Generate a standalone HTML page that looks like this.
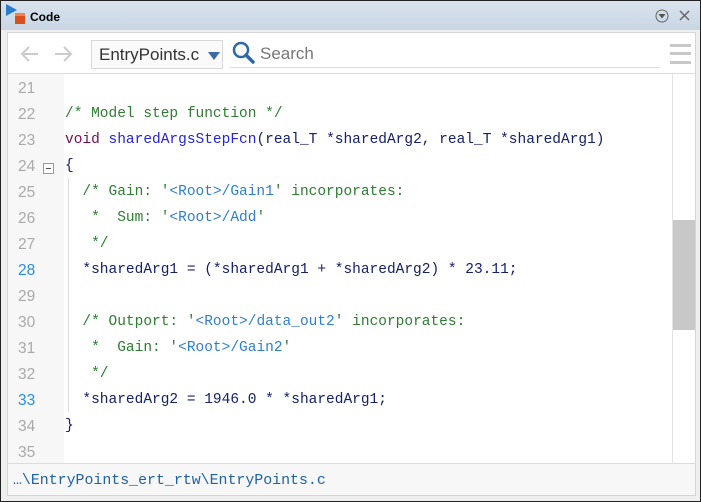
<!DOCTYPE html>
<html><head><style>
*{margin:0;padding:0;box-sizing:border-box}
body{width:701px;height:502px;overflow:hidden;background:#f0f0f0;font-family:"Liberation Sans",sans-serif;position:relative}
.win{position:absolute;left:0;top:0;width:701px;height:502px;border:1px solid #222;background:#efefef}
.title{position:absolute;left:0;top:0;width:699px;height:29px;background:linear-gradient(#d9e3ee,#c9d6e4)}
.title .t{position:absolute;left:29px;top:9px;font-size:12px;font-weight:bold;color:#000}
.panel{position:absolute;left:6px;top:31px;width:689px;height:464px;background:#fff;border:1px solid #d6d6d6}
.tool{position:absolute;left:0;top:0;width:687px;height:41px;border-bottom:1px solid #dcdcdc;background:#fff}
.dd{position:absolute;left:83px;top:7px;width:132px;height:29px;border:1px solid #d8d8d8;background:#fafafa;font-size:17px;color:#333;padding:4px 0 0 7px}
.search{position:absolute;left:252px;top:11px;font-size:17px;color:#777}
.sline{position:absolute;left:222px;top:34px;width:430px;border-top:1px solid #ddd}
.gut{position:absolute;left:0;top:41px;width:56px;height:389px;background:#f7f7f7}
.code{position:absolute;left:0;top:43px;width:664px;height:387px;font-family:"Liberation Mono",monospace;font-size:14.5px;white-space:pre}
.ln{position:absolute;left:10px;font-family:"Liberation Sans",sans-serif;font-size:15.5px;color:#aaa}
.l{position:absolute;left:57px;color:#14206a}
.c{color:#2e7d32}.k{color:#7a0a50}.f{color:#2424d8}.u{color:#2f7fd0}
.sb{position:absolute;left:664px;top:41px;width:23px;height:389px;border-left:1px solid #e4e4e4;background:#fff}
.thumb{position:absolute;left:665px;top:187px;width:22px;height:110px;background:#c8c8c8}
.status{position:absolute;left:0;top:430px;width:687px;height:32px;border-top:1px solid #dcdcdc;background:#f7f7f7;font-family:"Liberation Mono",monospace;font-size:14.9px;color:#2060a8;padding:9px 0 0 5px}
</style></head><body><div class="win">
<div class="title">
<svg style="position:absolute;left:4px;top:2px" width="22" height="22"><polygon points="1,1 12,7 1,13" fill="#2a7bd0"/><rect x="10" y="10" width="10" height="11" fill="#d9501c"/><rect x="10" y="10" width="10" height="3" fill="#f08050"/></svg>
<div class="t">Code</div>
<svg style="position:absolute;left:654px;top:8px" width="14" height="14"><circle cx="7" cy="7" r="6" fill="none" stroke="#666"/><polygon points="3.5,5 10.5,5 7,9.5" fill="#555"/></svg>
<svg style="position:absolute;left:678px;top:9px" width="11" height="11"><path d="M1 1L10 10M10 1L1 10" stroke="#666" stroke-width="1.5"/></svg>
</div>
<div class="panel">
<div class="tool">
<svg style="position:absolute;left:10px;top:10px" width="60" height="22"><path d="M20 11H4M11 4L4 11L11 18" stroke="#ccc" stroke-width="2" fill="none"/><path d="M37 11H53M46 4L53 11L46 18" stroke="#ccc" stroke-width="2" fill="none"/></svg>
<div class="dd">EntryPoints.c <span style="position:absolute;left:116px;top:11px;width:0;height:0;border-left:6px solid transparent;border-right:6px solid transparent;border-top:8px solid #3a6aa8"></span></div>
<svg style="position:absolute;left:224px;top:8px" width="24" height="24"><circle cx="9" cy="9" r="7" fill="none" stroke="#2e68a8" stroke-width="2.5"/><path d="M14 14L21 21" stroke="#2e68a8" stroke-width="3.5" stroke-linecap="round"/></svg>
<div class="search">Search</div>
<div class="sline"></div>
<div style="position:absolute;left:662px;top:11px;width:21px;height:3px;background:#c8c8c8"></div>
<div style="position:absolute;left:662px;top:19px;width:21px;height:3px;background:#c8c8c8"></div>
<div style="position:absolute;left:662px;top:28px;width:21px;height:3px;background:#c8c8c8"></div>
</div>
<div class="gut"></div>
<div class="code">
<div class="ln" style="top:4px">21</div>
<div class="ln" style="top:30px">22</div><div class="l c" style="top:30px">/* Model step function */</div>
<div class="ln" style="top:56px">23</div><div class="l" style="top:56px"><span class="k">void</span> <span class="f">sharedArgsStepFcn</span>(real_T *sharedArg2, real_T *sharedArg1)</div>
<div class="ln" style="top:82px">24</div><div style="position:absolute;left:35px;top:87px;width:11px;height:11px;border:1px solid #999;background:#fff"><div style="position:absolute;left:2px;top:4px;width:5px;height:1px;background:#555"></div></div><div class="l" style="top:82px">{</div>
<div style="position:absolute;left:60px;top:102px;width:1px;height:234px;background:#ddd"></div>
<div class="ln" style="top:108px">25</div><div class="l c" style="top:108px">  /* Gain: '<span class="u">&lt;Root&gt;/Gain1</span>' incorporates:</div>
<div class="ln" style="top:134px">26</div><div class="l c" style="top:134px">   *  Sum: '<span class="u">&lt;Root&gt;/Add</span>'</div>
<div class="ln" style="top:160px">27</div><div class="l c" style="top:160px">   */</div>
<div class="ln" style="top:186px;color:#2a8ee0">28</div><div class="l" style="top:186px">  *sharedArg1 = (*sharedArg1 + *sharedArg2) * 23.11;</div>
<div class="ln" style="top:212px">29</div>
<div class="ln" style="top:238px">30</div><div class="l c" style="top:238px">  /* Outport: '<span class="u">&lt;Root&gt;/data_out2</span>' incorporates:</div>
<div class="ln" style="top:264px">31</div><div class="l c" style="top:264px">   *  Gain: '<span class="u">&lt;Root&gt;/Gain2</span>'</div>
<div class="ln" style="top:290px">32</div><div class="l c" style="top:290px">   */</div>
<div class="ln" style="top:316px;color:#2a8ee0">33</div><div class="l" style="top:316px">  *sharedArg2 = 1946.0 * *sharedArg1;</div>
<div class="ln" style="top:342px">34</div><div class="l" style="top:342px">}</div>
<div class="ln" style="top:368px">35</div>
</div>
<div class="sb"></div><div class="thumb"></div>
<div class="status">…\EntryPoints_ert_rtw\EntryPoints.c</div>
</div>
</div></body></html>
